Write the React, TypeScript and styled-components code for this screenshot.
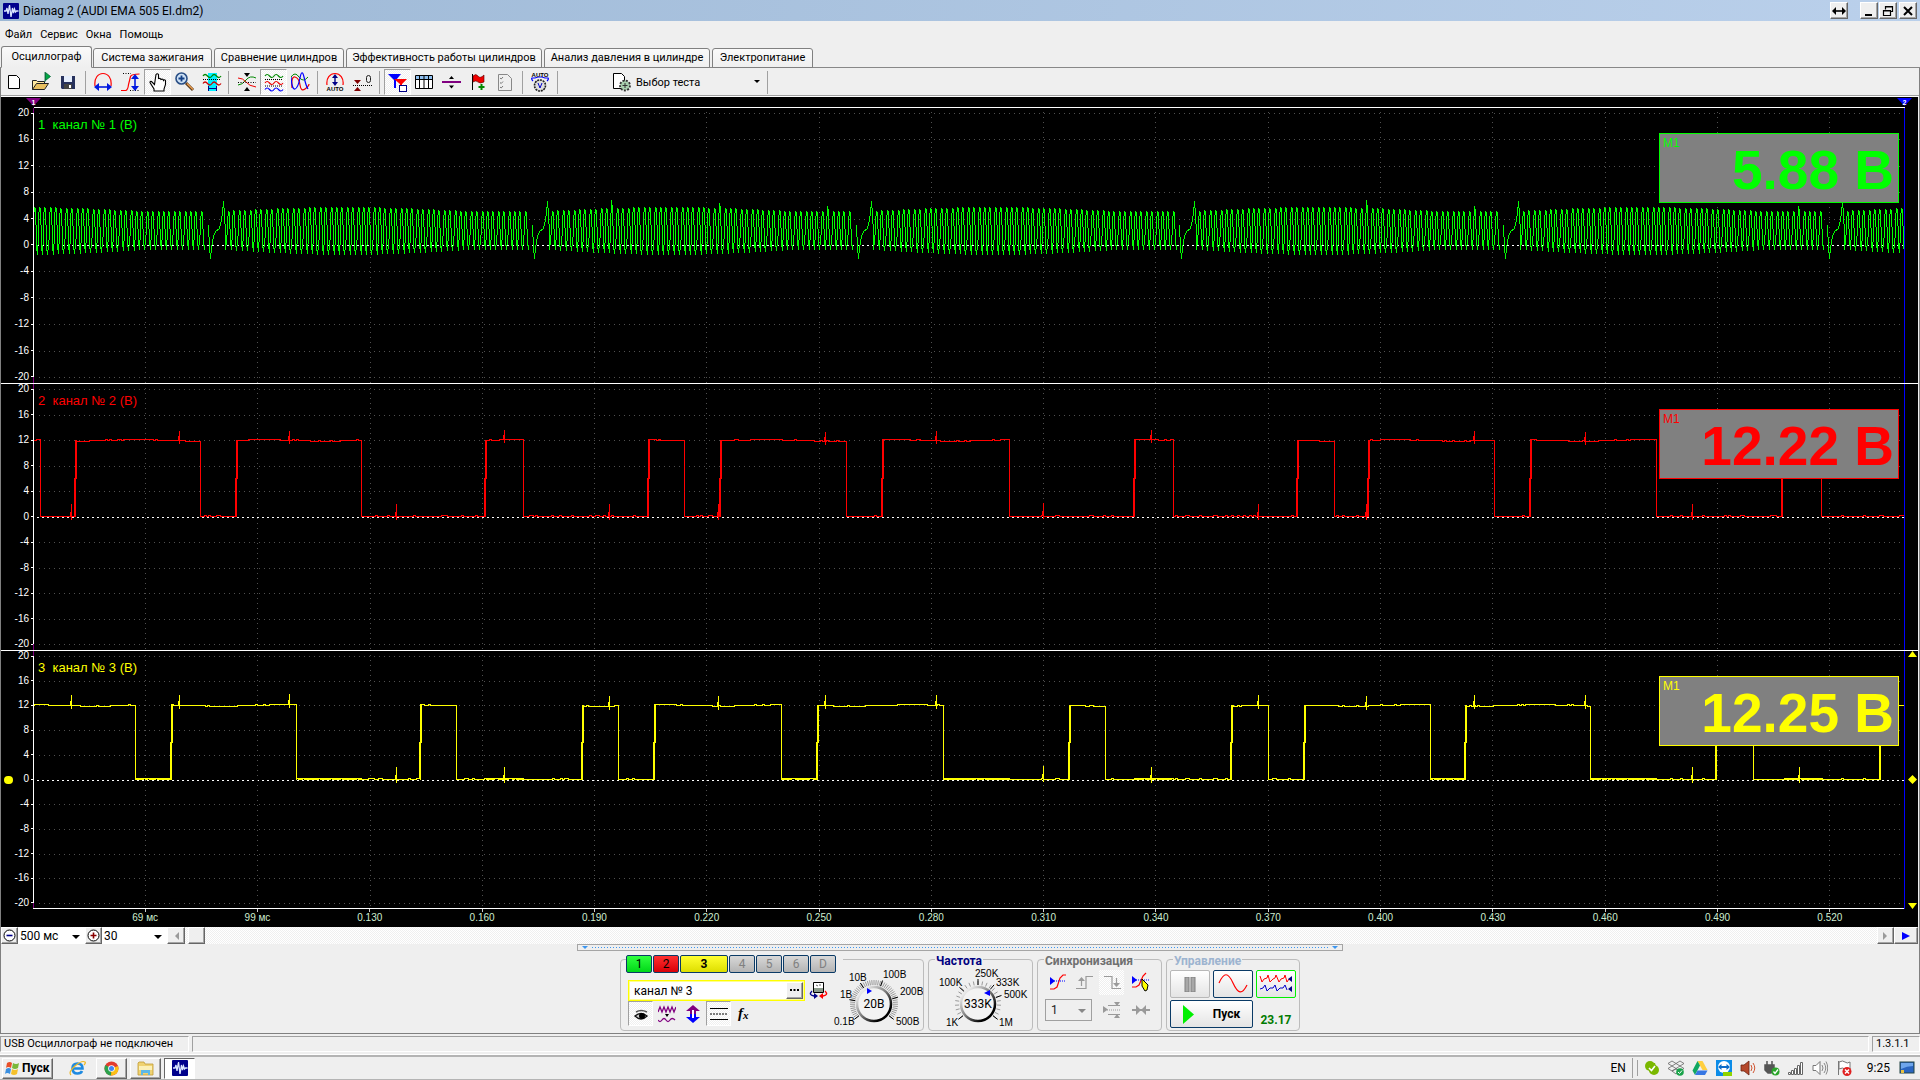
import React from "react";
import styled, { createGlobalStyle, css } from "styled-components";

const ui = `Roboto, "Noto Sans", "Liberation Sans", sans-serif`;
const arial = `"Liberation Sans", Arial, sans-serif`;

const hatch = css`
  background: repeating-conic-gradient(#ffffff 0 25%, #efefef 0 50%) 0 0 / 2px 2px;
`;

const Global = createGlobalStyle`
  * { box-sizing: border-box; }
  body { margin: 0; background: #efefef; font-family: ${ui}; font-size: 11px; color: #000; }
  button, input, select { font: inherit; color: inherit; margin: 0; padding: 0; }
  svg { display: block; flex: none; }
`;

const Page = styled.div`
  min-height: 100vh;
  display: flex;
  flex-direction: column;
  overflow: hidden;
`;

/* ---------- title bar and menu ---------- */

const TitleBar = styled.header`
  height: 21px;
  display: flex;
  align-items: center;
  padding: 0 3px;
  background: linear-gradient(90deg, #9db8d5, #bad0eb);
`;

const Title = styled.h1`
  flex: 1;
  margin: 0 0 0 4px;
  font-size: 12px;
  line-height: 16px;
  font-weight: 400;
`;

const WindowButtons = styled.div`
  display: flex;
  gap: 1px;
  margin-left: ${(p: { $gap?: number }) => p.$gap ?? 2}px;
`;

const raised = css`
  background: #efefef;
  border: 1px solid;
  border-color: #fff #666 #666 #fff;
  box-shadow: inset -1px -1px 0 #a5a5a5;
`;

const WinButton = styled.button`
  ${raised}
  width: 18px;
  height: 17px;
  display: flex;
  align-items: center;
  justify-content: center;
`;

const MenuBar = styled.nav`
  display: flex;
  gap: 8px;
  height: 25px;
  padding: 6px 5px 0;
`;

const MenuItem = styled.button`
  border: 0;
  background: none;
  height: 16px;
  line-height: 16px;
  font-size: 11px;
`;

const TabBar = styled.div`
  display: flex;
  align-items: flex-end;
  gap: 2px;
  height: 22px;
  padding-left: 1px;
  box-shadow: inset 0 -1px 0 #888;
`;

const Tab = styled.button<{ $w: number; $on?: boolean }>`
  width: ${(p) => p.$w}px;
  height: ${(p) => (p.$on ? 22 : 20)}px;
  border: 1px solid #808080;
  border-bottom-color: ${(p) => (p.$on ? "#efefef" : "#808080")};
  border-radius: 3px 3px 0 0;
  margin-right: ${(p) => (p.$on ? -1 : 0)}px;
  background: linear-gradient(#fafafa, #efefef);
  font-size: 11px;
  line-height: 16px;
  white-space: nowrap;
`;

/* ---------- window frame ---------- */

const Frame = styled.main`
  flex: 1;
  display: flex;
  flex-direction: column;
  border-left: 1px solid #808080;
  border-right: 1px solid #808080;
  border-bottom: 1px solid #808080;
`;

const Toolbar = styled.div`
  height: 29px;
  display: flex;
  align-items: center;
  border-bottom: 1px solid #fff;
  box-shadow: inset 0 -1px 0 #a0a0a0;
`;

const Tool = styled.button<{ $on?: boolean }>`
  width: 27px;
  height: 26px;
  display: flex;
  align-items: center;
  justify-content: center;
  border: 1px solid transparent;
  background: none;
  ${(p) => p.$on && hatch}
  ${(p) => p.$on && css`border-color: #a0a0a0 #fff #fff #a0a0a0;`}
`;

const ToolSep = styled.span`
  width: 8px;
  height: 23px;
  background: linear-gradient(#a0a0a0, #a0a0a0) 3px 0 / 1px 100% no-repeat;
`;

const TestPicker = styled.button`
  width: 202px;
  height: 24px;
  display: flex;
  align-items: center;
  gap: 4px;
  padding: 0 4px 0 50px;
  border: 0;
  background: none;
  text-align: left;
  font-size: 11px;
`;
const Grow = styled.span`flex: 1; white-space: nowrap;`;

/* ---------- plots ---------- */

const Plots = styled.section`
  flex: 1;
  min-height: 600px;
  margin-right: 1px;
  display: grid;
  grid-template-rows: 11px 276fr 267fr 258fr 18px;
  background: #000;
`;

const CursorStrip = styled.div`
  display: flex;
  justify-content: space-between;
  align-items: flex-end;
  padding: 0 6px 0 25px;
  background: linear-gradient(#fff, #fff) 33px 100% / calc(100% - 46px) 1px no-repeat;
`;

const ChannelRow = styled.div<{ $line?: boolean }>`
  position: relative;
  min-height: 0;
  display: grid;
  grid-template-columns: 32px minmax(0, 1fr) 13px;
  ${(p) => p.$line && css`box-shadow: inset 0 -1px 0 #fff;`}
`;

const Scale = styled.ol`
  margin: 0;
  padding: 0 0 ${(p: { $pad: number }) => p.$pad}px;
  list-style: none;
  display: flex;
  flex-direction: column;
  justify-content: space-between;
`;

const ScaleMark = styled.li`
  height: 10px;
  line-height: 10px;
  display: flex;
  align-items: center;
  justify-content: flex-end;
  gap: 2px;
  color: #fff;
  font-family: ${arial};
  font-size: 10px;
  &::after { content: ""; width: 2px; height: 1px; background: #fff; }
`;

const PlotSvg = styled.svg`
  width: 100%;
  height: 100%;
  min-height: 0;
`;

const ChannelName = styled.h2<{ $c: string }>`
  position: absolute;
  left: 37px;
  top: 9px;
  margin: 0;
  color: ${(p) => p.$c};
  font-family: ${arial};
  font-weight: 400;
  font-size: 13px;
  line-height: 16px;
  white-space: pre;
`;

const Readout = styled.output<{ $c: string }>`
  position: absolute;
  right: 19px;
  top: 25px;
  width: 240px;
  height: 70px;
  display: flex;
  justify-content: space-between;
  padding: 2px 4px 0 3px;
  background: #808080;
  border: 1px solid ${(p) => p.$c};
  color: ${(p) => p.$c};
  font-family: ${arial};
`;
const ReadoutName = styled.span`font-size: 12px; line-height: 14px;`;
const ReadoutValue = styled.span`font-size: 55px; line-height: 68px; font-weight: 700; white-space: nowrap;`;

const ZeroDot = styled.span`
  position: absolute;
  left: 3px;
  top: 125px;
  width: 9px;
  height: 8px;
  border-radius: 4px;
  background: #ff0;
`;

const TimeAxis = styled.ol`
  margin: 0;
  padding: 0 32px 0 88px;
  list-style: none;
  display: flex;
`;
const TimeMark = styled.li`
  flex: 1;
  display: flex;
  flex-direction: column;
  align-items: center;
  color: #cfeed0;
  font-family: ${arial};
  font-size: 10px;
  line-height: 12px;
  &::before { content: ""; width: 1px; height: 3px; background: #ccc; }
`;

/* ---------- zoom / scroll row ---------- */

const ScrollRow = styled.div`
  height: 17px;
  margin-right: 1px;
  display: flex;
  align-items: stretch;
  background: #fff;
`;

const SmallButton = styled.button<{ $w?: number }>`
  ${raised}
  width: ${(p) => p.$w ?? 17}px;
  height: 17px;
  display: flex;
  align-items: center;
  justify-content: center;
`;

const SelectWrap = styled.label<{ $w: number }>`
  position: relative;
  width: ${(p) => p.$w}px;
  display: flex;
  &::after {
    content: "";
    position: absolute;
    right: 5px;
    top: 50%;
    margin-top: -1px;
    border: 4px solid transparent;
    border-top-color: currentColor;
    border-bottom: 0;
  }
`;

const PlainSelect = styled.select`
  appearance: none;
  width: 100%;
  border: 0;
  padding-left: 2px;
  background: transparent;
  font-size: 12px;
`;

const Track = styled.div`
  ${hatch}
  flex: 1;
  padding-left: 3px;
`;

/* ---------- control panel ---------- */

const Splitter = styled.div`
  width: 766px;
  max-width: 100%;
  height: 7px;
  align-self: center;
  display: flex;
  align-items: center;
  gap: 4px;
  padding: 0 4px;
  border: 1px solid #a5a5a5;
`;
const Dots = styled.span`
  flex: 1;
  height: 1px;
  background: repeating-linear-gradient(90deg, #3c96f0 0 1px, transparent 1px 3px);
`;

const Panel = styled.div`
  display: flex;
  justify-content: center;
  gap: 4px;
  padding: 8px 0 2px;
`;

const Group = styled.section<{ $w: number }>`
  width: ${(p) => p.$w}px;
  height: 72px;
  border: 1px solid #bcbcbc;
  border-radius: 4px;
`;

const GroupTitle = styled.h3<{ $c: string }>`
  width: fit-content;
  height: 13px;
  margin: -5px 0 0 6px;
  padding: 0 1px;
  background: #efefef;
  color: ${(p) => p.$c};
  font-size: 12px;
  line-height: 12px;
  font-weight: 700;
`;

const ChannelGroup = styled(Group)`
  display: flex;
  padding-left: 5px;
`;
const ChannelLeft = styled.div`width: 207px;`;

const ChannelTabs = styled.div`
  display: flex;
  gap: 1px;
  width: 217px;
  margin-top: -5px;
  background: #efefef;
`;

const ChannelTab = styled.button<{ $bg?: string; $w?: number }>`
  flex: none;
  width: ${(p) => p.$w ?? 26}px;
  height: 18px;
  border: 1px solid #0a3a66;
  border-radius: 2px;
  background: ${(p) => p.$bg ?? "linear-gradient(#d8d8d8, #b4b4b4)"};
  color: ${(p) => (p.$bg ? "#000" : "#808080")};
  font-size: 12px;
  line-height: 16px;
  font-weight: ${(p) => (p.$w ? 700 : 400)};
`;

const NameRow = styled.div`
  display: flex;
  align-items: center;
  gap: 4px;
  margin: 7px 0 0 2px;
`;
const NameBox = styled.div`
  width: 177px;
  height: 21px;
  display: flex;
  border: 1px solid #ff0;
  outline: 1px solid #ffff90;
  outline-offset: -2px;
  background: #fff;
  padding: 1px;
`;
const NameInput = styled.input`
  flex: 1;
  min-width: 0;
  border: 0;
  outline: 0;
  padding-left: 4px;
  background: transparent;
  font-size: 12px;
`;

const IconRow = styled.div`
  display: flex;
  gap: 1px;
  margin: 0 0 0 2px;
`;
const IconButton = styled(Tool)<{ $soft?: boolean }>`
  width: 25px;
  height: 25px;
  ${(p) => p.$soft && hatch}
`;

const SyncGrid = styled.div`
  display: grid;
  grid-template-columns: 26px 28px 29px 29px;
  grid-template-rows: 28px 28px;
  align-items: center;
  padding: 0 0 0 7px;
`;
const SyncSelect = styled(SelectWrap)`
  grid-column: span 2;
  height: 22px;
  border: 1px solid #a0a0a0;
  color: #888;
  select { color: #222; padding-left: 5px; opacity: 1; }
`;

const RunGrid = styled.div`
  display: grid;
  grid-template-columns: repeat(3, 40px);
  grid-template-rows: 28px 28px;
  gap: 2px 3px;
  padding: 2px 0 0 3px;
`;
const RunButton = styled.button<{ $c: string; $wide?: boolean }>`
  grid-column: span ${(p) => (p.$wide ? 2 : 1)};
  display: flex;
  align-items: center;
  justify-content: center;
  gap: 19px;
  border: 1px solid ${(p) => p.$c};
  border-radius: 2px;
  background: linear-gradient(#fff, #e4e4e4);
  font-size: 12px;
  font-weight: 700;
`;
const Load = styled.output`
  align-self: end;
  justify-self: center;
  color: #007a00;
  font-size: 12px;
  line-height: 16px;
  font-weight: 700;
`;

/* ---------- status and task bar ---------- */

const StatusBar = styled.footer`
  height: 21px;
  display: flex;
  gap: 3px;
  padding: 2px 0;
  border-bottom: 1px solid #fff;
`;
const StatusCell = styled.span<{ $w?: number }>`
  ${(p) => (p.$w ? css`width: ${p.$w}px;` : css`flex: 1;`)}
  border: 1px solid;
  border-color: #a0a0a0 #fff #fff #a0a0a0;
  padding-left: 3px;
  font-size: 11px;
  line-height: 14px;
  white-space: nowrap;
`;

const TaskBar = styled.footer`
  height: 26px;
  display: flex;
  align-items: center;
  gap: 3px;
  padding: 0 5px 0 2px;
  border-top: 2px solid #b4b4b4;
  border-bottom: 2px solid #b4b4b4;
`;
const StartButton = styled.button`
  ${raised}
  width: 51px;
  height: 21px;
  display: flex;
  align-items: center;
  gap: 1px;
  padding-left: 1px;
  font-size: 12px;
  font-weight: 700;
`;
const TaskButton = styled.button<{ $kind?: "flat" | "on" }>`
  ${raised}
  width: 31px;
  height: 21px;
  display: flex;
  align-items: center;
  justify-content: center;
  ${(p) => p.$kind === "flat" && css`border-color: transparent; box-shadow: none; margin-left: 6px;`}
  ${(p) => p.$kind === "on" && css`background: #fff; border-color: #666 #fff #fff #666; box-shadow: none;`}
`;
const TaskSpace = styled.span`flex: 1;`;
const Lang = styled.span`
  padding-right: 6px;
  margin-right: 1px;
  border-right: 1px solid #a0a0a0;
  font-size: 12px;
  line-height: 20px;
`;
const Tray = styled.div`
  display: flex;
  align-items: center;
  gap: 8px;
  padding-left: 6px;
  border-left: 1px solid #a0a0a0;
`;
const Clock = styled.time`
  margin: 0 6px 0 12px;
  font-size: 12px;
  line-height: 20px;
`;

/* ---------- signal shapes ---------- */

const noise = (n: number) => {
  const v = Math.sin(n * 12.9898) * 43758.5453;
  return v - Math.floor(v);
};

const SPIKES = [71, 179, 289, 396, 504, 609, 718, 825, 936, 1043, 1151, 1258, 1366, 1474, 1585, 1692, 1799];

/* pickup from ignition visible on the crank sensor trace: position and height */
const PICKUP: [number, number][] = [[609, 8], [718, 5], [825, 5], [1366, 8], [1474, 5], [1799, 5]];

/* 60-2 trigger wheel: 58 teeth followed by a gap */
function crankPath() {
  const turn = 323.75;
  const tooth = turn / 60;
  let d = "";
  for (let k = -1; k < 6; k++) {
    const dip = Math.round(210 + k * turn);
    d += `M${dip - 2} 225L${dip - 1} 247L${dip} 258L${dip + 1} 247L${dip + 3} 236L${dip + 5} 231L${dip + 9} 228L${dip + 11} 219L${dip + 12} 213L${dip + 13} 201L${dip + 14} 214L${dip + 15} 232L${dip + 15} 249`;
    for (let i = 0; i < 57; i++) {
      const x = Math.round(dip + 18 + i * tooth);
      if (x > dip + turn - 5) break;
      const t = i < 44 ? Math.sin((Math.PI * (i + 1)) / 45) : 0;
      const extra = PICKUP.find(([s]) => Math.abs(s - x) < 3);
      const top = Math.round(211 - 4 * t);
      const low = Math.round(249 + 5 * t);
      const peak = extra ? top - extra[1] : top;
      d += `L${x - 1} ${low - 19}L${x - 1} ${top + 8}L${x} ${top + 1}L${x} ${peak}L${x + 1} ${top + 1}L${x + 1} ${top + 16}L${x + 2} ${top + 19}L${x + 2} ${low - 4}L${x + 3} ${low - 4}L${x + 3} ${low}`;
    }
  }
  return d;
}

function squarePath(edges: number[], hi: number, lo: number, nub: number) {
  let d = "";
  let high = true;
  let x = 34;
  const stops = [...edges, 1904];
  for (const e of stops) {
    const base = high ? hi : lo;
    d += x === 34 ? `M${x} ${base}` : `L${x} ${base}`;
    for (; x < e - 2; x += 2) {
      const wave = high ? Math.sin(x / 20 + edges.length) * 0.7 : 0;
      const y = base + Math.round(wave + (noise(x) > 0.85 ? -0.6 : 0));
      d += `H${x}V${y}`;
      const s = SPIKES.find((p) => p > x && p <= x + 2);
      if (s) d += `L${s - 1} ${y}L${s - 1} ${y - 4}L${s} ${y - 4}L${s} ${y - (high ? nub : 13)}L${s} ${y + 3}L${s} ${y}`;
    }
    if (e === 1904) d += `H${e}`;
    else if (high) d += `H${e}V${lo}`;
    else {
      const mid = Math.round((hi + lo) / 2);
      d += `H${e - 1}V${mid}H${e}V${lo}V${hi}H${e + 1}V${mid}V${hi}`;
    }
    x = e;
    high = !high;
  }
  return d;
}

const RED_EDGES = [40, 75, 200, 236, 361, 485, 523, 648, 684, 720, 846, 882, 1009, 1134, 1173, 1297, 1334, 1368, 1494, 1530, 1656, 1782, 1821];
const YELLOW_EDGES = [135, 171, 296, 420, 456, 582, 618, 654, 781, 817, 943, 1069, 1105, 1231, 1268, 1304, 1430, 1465, 1590, 1716, 1753, 1880];
const YELLOW_THICK = "M136 778H170M297 778H361M485 778H523M782 778H816M944 778H1009M1134 778H1173M1431 778H1464M1591 778H1656M1784 778H1822";

type ChannelSpec = { n: number; color: string; value: string; top: number; h: number; y20: number; yNeg: number; path: string };

const CHANNELS: ChannelSpec[] = [
  { n: 1, color: "#00ff00", value: "5.88 В", top: 108, h: 276, y20: 113, yNeg: 377, path: crankPath() },
  { n: 2, color: "#ff0000", value: "12.22 В", top: 384, h: 267, y20: 389, yNeg: 644, path: squarePath(RED_EDGES, 440, 516, 10) },
  { n: 3, color: "#ffff00", value: "12.25 В", top: 651, h: 258, y20: 656, yNeg: 903, path: squarePath(YELLOW_EDGES, 705, 779, 11) + YELLOW_THICK },
];

const MARKS = [20, 16, 12, 8, 4, 0, -4, -8, -12, -16, -20];
const TIMES = ["69 мс", "99 мс", "0.130", "0.160", "0.190", "0.220", "0.250", "0.280", "0.310", "0.340", "0.370", "0.400", "0.430", "0.460", "0.490", "0.520"];

function Channel({ c }: { c: ChannelSpec }) {
  const step = (c.yNeg - c.y20) / 10;
  return (
    <ChannelRow $line={c.n < 3}>
      <Scale $pad={c.n === 3 ? 1 : 2}>
        {MARKS.map((m) => <ScaleMark key={m}>{m}</ScaleMark>)}
      </Scale>
      <PlotSvg viewBox={`33 ${c.top} 1872 ${c.h}`} preserveAspectRatio="none" fill="none" shapeRendering="crispEdges">
        {MARKS.map((m, i) => {
          const y = Math.round(c.y20 + step * i) + 0.5;
          return m === 0
            ? <line key={m} x1="33" x2="1905" y1={y} y2={y} stroke="#fff" strokeDasharray="2 3" strokeDashoffset="1" />
            : <line key={m} x1="39" x2="1903" y1={y} y2={y} stroke="#505050" strokeDasharray="1 4" />;
        })}
        {TIMES.map((t, i) => {
          const x = Math.round(145 + i * 112.27) + 0.5;
          return <line key={t} x1={x} x2={x} y1={c.y20 - 1} y2={c.top + c.h} stroke="#505050" strokeDasharray="1 4" />;
        })}
        <path d={c.path} transform="translate(.5 .5)" stroke={c.color} strokeWidth="1" strokeLinecap="square" />
        <path d={`M33.5 ${c.top}V${c.top + c.h}`} stroke="#800080" />
        <path d={`M33.5 ${c.y20}V${c.yNeg}`} stroke="#fff" />
        {c.n === 3 && <path d="M33 908.5H1904" stroke="#fff" />}
        <path d={`M1904.5 ${c.top}V${c.top + c.h}`} stroke="#00f" />
        {c.n < 3 && <path d={`M33 ${c.top + c.h - 0.5}H1905`} stroke="#fff" />}
      </PlotSvg>
      {c.n === 3 && (
        <PlotSvg viewBox="1905 651 13 258" preserveAspectRatio="none" fill="#ff0">
          <path d="M1908 657h9l-4.500-6zM1908 779.500l4.500-4.500 4.500 4.500-4.500 4.500zM1908 903h9l-4.500 6z" />
        </PlotSvg>
      )}
      {c.n === 3 && <ZeroDot />}
      <ChannelName $c={c.color}>{`${c.n}  канал № ${c.n} (В)`}</ChannelName>
      <Readout $c={c.color} aria-label={`M1 канал ${c.n}`}>
        <ReadoutName>M1</ReadoutName>
        <ReadoutValue>{c.value}</ReadoutValue>
      </Readout>
    </ChannelRow>
  );
}

/* ---------- icons ---------- */

const Svg = ({ w = 20, h = 20, children }: { w?: number; h?: number; children: React.ReactNode }) => (
  <svg width={w} height={h} viewBox={`0 0 ${w} ${h}`} fill="none" aria-hidden="true">{children}</svg>
);

const Logo = () => (
  <Svg w={16} h={16}>
    <rect width="16" height="16" rx="1" fill="#00008c" />
    <path d="M1 8h2l1-3 1 6 1.500-9 1.500 12 1.500-9 1 5 1-4 1 3 1-1h2" stroke="#dbe6ff" strokeWidth="1.300" />
  </Svg>
);

const W = "q2-3 4.500 0t4.500 0 4.500 0 4.500 0";

const icons: Record<string, React.ReactNode> = {
  new: <path d="M3.500 3.500h8l3 3v10h-11z" fill="#fff" stroke="#000" />,
  open: <><path d="M.5 17.500v-9h4l1 1h7v3" fill="#ffe9a0" stroke="#222" /><path d="M.5 17.500l4-6h12l-4 6z" fill="#e8c060" stroke="#222" /><path d="M13 0v10M13.500 .5l5 4-5 4z" fill="#0a4" stroke="#063" strokeWidth=".8" /></>,
  save: <><path d="M2 4h14v13H3l-1-1z" fill="#27315c" /><path d="M5 4h8v6H5z" fill="#e6eefc" /><path d="M5 12h8v5H5z" fill="#444" /><path d="M10 13h2v3h-2z" fill="#fff" /></>,
  spanH: <><path d="M1 14C0 6 4 1.500 9 1.500S18 6 17 14" stroke="#f00" strokeWidth="1.200" /><path d="M4 15h10" stroke="#0018e0" strokeWidth="1.600" /><path d="M0 15l5-4v8zM18 15l-5-4v8z" fill="#0018e0" /></>,
  spanV: <><path d="M0 18.500h5q2-1 2.500-6l2-8q1-2.500 9-2.500" stroke="#f00" strokeWidth="1.200" /><path d="M2 1.500h8M9 18.500h10" stroke="#000" strokeDasharray="1 1.500" /><path d="M14 5v11" stroke="#0018e0" strokeWidth="1.600" /><path d="M14 2l-4 5h8zM14 19l-4-5h8z" fill="#0018e0" /></>,
  hand: <path d="M6.500 12.500l-3-3q-1.500-.5-1.500 1l4 6.500v2h10v-2l1.500-4.500v-4q-1-1.500-2 0-.5-2-2.500-1-.5-1.500-2.500-1v-4q-1.200-1.500-2.500 0z" fill="#fff" stroke="#000" strokeWidth="1.100" />,
  zoom: <><circle cx="6.500" cy="6.500" r="5.500" fill="#cfe2f5" stroke="#2a4f86" strokeWidth="1.600" /><path d="M6.500 3.500v6M3.500 6.500h6" stroke="#123f86" strokeWidth="1.800" /><path d="M11 11l7 7" stroke="#5a3a1a" strokeWidth="3" /><path d="M12 11.500l6 6" stroke="#f0a050" strokeWidth="1.200" /></>,
  region: <><path d="M6 1h9v18H6z" fill="#00f0ff" /><path d={`M1 4${W}`} stroke="#080" strokeWidth="1.300" /><path d={`M1 11.500${W}`} stroke="#c00" strokeWidth="1.300" /><path d="M1 7.500h18" stroke="#000" strokeDasharray="1 1" /><path d="M6.500 14v5M14.500 14v5M7 16.500h7" stroke="#008" /></>,
  compress: <><path d="M1 13q4 0 8-5t10-2" stroke="#080" /><path d="M1 6q5 0 8 4t10 5" stroke="#e00" /><path d="M1 10.500h18" stroke="#000" strokeDasharray="1 1.500" /><path d="M7 1h6l-3 4zM7 19h6l-3-4z" fill="#000" /></>,
  stack: <><path d={`M1 4${W}`} stroke="#080" strokeWidth="1.200" /><path d={`M1 11${W}`} stroke="#e00" strokeWidth="1.200" /><path d={`M1 17.500${W}`} stroke="#00f" strokeWidth="1.200" /><path d="M1 7.500h18M1 14h18" stroke="#000" strokeDasharray="1 1" /></>,
  overlay: <><path d="M0 5q4-6 8 0t9 0" stroke="#080" /><path d="M1 16Q0 4 4 5t5 8 5 4 4-5" stroke="#e00" strokeWidth="1.200" /><path d="M0 5q1 13 4 12t5-11 4-1 4 12" stroke="#00f" strokeWidth="1.200" /></>,
  auto: <><path d="M1 13C0 6 4 1.500 9 1.500S18 6 17 13" stroke="#f00" strokeWidth="1.200" /><path d="M9 4v8" stroke="#008" strokeWidth="1.400" /><path d="M6 6l3-4 3 4zM6 10l3 4 3-4z" fill="#008" /></>,
  zero: <><path d="M1 8h7l-3.500 4zM1 19h7l-3.500-4z" fill="#800000" /><path d="M0 13.500h19" stroke="#000" strokeDasharray="1 1" /><rect x="13.500" y="3.500" width="4" height="7" rx="2" stroke="#222" /></>,
  cursors: <><path d="M0 2h13L8 8v8H6V8z" fill="#00f" /><path d="M6 7h13l-5 5v7h-2v-7z" fill="#f00" /><rect x="11.500" y="13.500" width="7" height="6" fill="#fff" stroke="#008" /></>,
  table: <><path d="M.5 3.500h17v13H.5z" fill="#fff" stroke="#000" /><path d="M1 4h16v3H1z" fill="#8fc0f0" /><path d="M0 7.500h18M4.500 4v13M9 4v13M13.500 4v13" stroke="#000" /></>,
  split: <><path d="M0 10h19" stroke="#800080" strokeWidth="2" /><path d="M7 7h5l-2.500-3zM7 13.500h5l-2.500 3z" fill="#000" /></>,
  flag: <><path d="M3.500 2v16" stroke="#000" /><path d="M4 4q3-3 5 0t6-1v7q-4 2-6 0t-5 0z" fill="#f00000" stroke="#500" strokeWidth=".6" /><path d="M12.500 12v6M9.500 15h6" stroke="#080" strokeWidth="2" /></>,
  checks: <><path d="M2.500 2.500h9l4 4v12h-13z" stroke="#888" /><path d="M4 6l1.200 1L7 5M4 10.500l1.200 1L7 9.500M4 15l1.200 1L7 14" stroke="#777" /></>,
  autoV: <><path d="M2 9q-2-2-1-3h3l3-1h4l3 1h3q1 1-1 3" stroke="#00f" strokeWidth="1.200" /><circle cx="9" cy="13.500" r="5.500" fill="#ddd" stroke="#222" strokeDasharray="2 .8" strokeWidth="1.600" /><path d="M7 11l2 5 2-5" stroke="#00c" /></>,
  test: <><path d="M1.500 1.500h8l3 3v12h-11z" fill="#fff" stroke="#000" /><circle cx="13" cy="13.500" r="5" fill="#a9cfae" stroke="#333" strokeWidth="1.800" strokeDasharray="2 1.400" /><path d="M10.500 13.500h5M13 11v5" stroke="#333" /></>,
};

const autoText = (y: number) => (
  <text x="9" y={y} textAnchor="middle" fontFamily="Liberation Sans" fontSize="6" fontWeight="700" fill="#000">AUTO</text>
);

const TOOL_GROUPS: { id: string; label: string; on?: boolean }[][] = [
  [{ id: "new", label: "Новый" }, { id: "open", label: "Открыть" }, { id: "save", label: "Сохранить" }],
  [{ id: "spanH", label: "По горизонтали" }, { id: "spanV", label: "По вертикали" }, { id: "hand", label: "Рука", on: true }, { id: "zoom", label: "Лупа" }, { id: "region", label: "Участок" }],
  [{ id: "compress", label: "Сжать" }, { id: "stack", label: "Раздельно", on: true }, { id: "overlay", label: "Совместно" }],
  [{ id: "auto", label: "Авто" }, { id: "zero", label: "Ноль" }],
  [{ id: "cursors", label: "Маркеры", on: true }, { id: "table", label: "Таблица" }, { id: "split", label: "Разделить" }, { id: "flag", label: "Метка" }, { id: "checks", label: "Список" }],
  [{ id: "autoV", label: "Авто напряжение" }],
];

/* ---------- knobs ---------- */

type KnobProps = { view: string; w: number; cx: number; value: string; pointer: string; dense?: boolean; labels: [string, number, number][]; major: number[] };

function Knob({ view, w, cx, value, pointer, labels, major, dense }: KnobProps) {
  const cy = 1004;
  const ticks = dense ? 48 : 22;
  const ray = (a: number, r1: number, r2: number) => {
    const t = (a * Math.PI) / 180;
    return `M${cx + Math.sin(t) * r1} ${cy - Math.cos(t) * r1}L${cx + Math.sin(t) * r2} ${cy - Math.cos(t) * r2}`;
  };
  return (
    <svg width={w} height="66" viewBox={view} fontFamily="Liberation Sans" role="img" aria-label={value}>
      <defs>
        <linearGradient id={`rim${w}`} x1="0" y1="0" x2="1" y2="1">
          <stop offset=".15" stopColor="#e8e8e8" />
          <stop offset=".5" stopColor="#777" />
          <stop offset=".8" stopColor="#000" />
        </linearGradient>
      </defs>
      {Array.from({ length: ticks + 1 }, (_, i) => (
        <path key={i} d={ray(-128 + (256 / ticks) * i, 19, dense ? 24 : 23)} stroke="#9a9a9a" strokeWidth="1" />
      ))}
      {major.map((a) => <path key={a} d={ray(a, 19, 25)} stroke="#000" />)}
      <circle cx={cx} cy={cy} r="17" fill="#f3f3f3" stroke={`url(#rim${w})`} strokeWidth="2.500" />
      <path d={pointer} fill="#00f" />
      <text x={cx} y={cy + 4} textAnchor="middle" fontFamily="Roboto" fontSize="12">{value}</text>
      {labels.map(([t, x, y]) => <text key={t} x={x} y={y} fontSize="10">{t}</text>)}
    </svg>
  );
}

const gray = "#9a9a9a";

export default function App() {
  return (
    <>
      <Global />
      <Page>
        <TitleBar>
          <Logo />
          <Title>Diamag 2 (AUDI EMA 505 EI.dm2)</Title>
          <WindowButtons>
            <WinButton aria-label="Растянуть"><Svg w={14} h={10}><path d="M2 5h10" stroke="#000" strokeWidth="1.600" /><path d="M0 5l4-4v8zM14 5l-4-4v8z" fill="#000" /></Svg></WinButton>
          </WindowButtons>
          <WindowButtons $gap={12}>
            <WinButton aria-label="Свернуть"><Svg w={12} h={12}><path d="M2 10h7" stroke="#000" strokeWidth="2" /></Svg></WinButton>
            <WinButton aria-label="Восстановить"><Svg w={12} h={12}><path d="M3.500 4.500v-3h7v5h-2M3 2h8M1.500 5.500h7v5h-7zM1 6h8" stroke="#000" strokeWidth="1.200" /></Svg></WinButton>
          </WindowButtons>
          <WindowButtons>
            <WinButton aria-label="Закрыть"><Svg w={12} h={12}><path d="M2 2l8 8M10 2l-8 8" stroke="#000" strokeWidth="2" /></Svg></WinButton>
          </WindowButtons>
        </TitleBar>

        <MenuBar>
          {["Файл", "Сервис", "Окна", "Помощь"].map((m) => <MenuItem key={m}>{m}</MenuItem>)}
        </MenuBar>
        <TabBar role="tablist">
          <Tab role="tab" $on $w={91}>Осциллограф</Tab>
          <Tab role="tab" $w={119}>Система зажигания</Tab>
          <Tab role="tab" $w={130}>Сравнение цилиндров</Tab>
          <Tab role="tab" $w={196}>Эффективность работы цилиндров</Tab>
          <Tab role="tab" $w={166}>Анализ давления в цилиндре</Tab>
          <Tab role="tab" $w={101}>Электропитание</Tab>
        </TabBar>

        <Frame>
          <Toolbar>
            {TOOL_GROUPS.map((g, i) => (
              <React.Fragment key={i}>
                {g.map((t) => (
                  <Tool key={t.id} $on={t.on} aria-label={t.label}>
                    <Svg>{icons[t.id]}{t.id === "auto" && autoText(19)}{t.id === "autoV" && autoText(5)}</Svg>
                  </Tool>
                ))}
                <ToolSep />
              </React.Fragment>
            ))}
            <TestPicker>
              <Svg>{icons.test}</Svg>
              <Grow>Выбор теста</Grow>
              <Svg w={6} h={4}><path d="M0 0h6L3 3z" fill="#000" /></Svg>
            </TestPicker>
            <ToolSep />
          </Toolbar>

          <Plots>
            <CursorStrip>
              <svg width="15" height="10" viewBox="0 0 15 10" role="img" aria-label="Маркер 1"><path d="M0 0h15L7.500 8z" fill="#800080" /><text x="7.500" y="7" textAnchor="middle" fontFamily="Liberation Sans" fontSize="7" fontWeight="700" fill="#fff">1</text></svg>
              <svg width="15" height="10" viewBox="0 0 15 10" role="img" aria-label="Маркер 2"><path d="M0 0h15L7.500 8z" fill="#00f" /><text x="7.500" y="7" textAnchor="middle" fontFamily="Liberation Sans" fontSize="7" fontWeight="700" fill="#fff">2</text></svg>
            </CursorStrip>
            {CHANNELS.map((c) => <Channel key={c.n} c={c} />)}
            <TimeAxis>{TIMES.map((t) => <TimeMark key={t}>{t}</TimeMark>)}</TimeAxis>
          </Plots>

          <ScrollRow>
            <SmallButton aria-label="Уменьшить"><Svg w={13} h={13}><circle cx="6.500" cy="6.500" r="5.500" fill="#fff" stroke="#000" /><path d="M3.500 6.500h6" stroke="#008" strokeWidth="1.600" /></Svg></SmallButton>
            <SelectWrap $w={67}><PlainSelect aria-label="Длительность" defaultValue="500"><option value="500">500 мс</option></PlainSelect></SelectWrap>
            <SmallButton aria-label="Увеличить"><Svg w={13} h={13}><circle cx="6.500" cy="6.500" r="5.500" fill="#fff" stroke="#000" /><path d="M3.500 6.500h6M6.500 3.500v6" stroke="#800" strokeWidth="1.600" /></Svg></SmallButton>
            <SelectWrap $w={65}><PlainSelect aria-label="Шаг" defaultValue="30"><option>30</option></PlainSelect></SelectWrap>
            <SmallButton $w={18} aria-label="Влево"><Svg w={5} h={8}><path d="M5 0v8L1 4z" fill={gray} /></Svg></SmallButton>
            <Track><SmallButton aria-label="Ползунок" /></Track>
            <SmallButton aria-label="Вправо"><Svg w={5} h={8}><path d="M0 0v8l4-4z" fill={gray} /></Svg></SmallButton>
            <SmallButton $w={24} aria-label="Прокрутка"><Svg w={8} h={8}><path d="M0 0v8l8-4z" fill="#00f" /></Svg></SmallButton>
          </ScrollRow>

          <Splitter>
            <Svg w={6} h={4}><path d="M0 0h6L3 3z" fill="#3c96f0" /></Svg><Dots /><Svg w={6} h={4}><path d="M0 0h6L3 3z" fill="#3c96f0" /></Svg>
          </Splitter>

          <Panel>
            <ChannelGroup $w={304} aria-label="Канал">
              <ChannelLeft>
                <ChannelTabs>
                  <ChannelTab $bg="linear-gradient(#30ff40, #00d818)">1</ChannelTab>
                  <ChannelTab $bg="linear-gradient(#ff3030, #d80008)">2</ChannelTab>
                  <ChannelTab $bg="linear-gradient(#ffff30, #dede00)" $w={48}>3</ChannelTab>
                  {["4", "5", "6", "D"].map((t) => <ChannelTab key={t} disabled>{t}</ChannelTab>)}
                </ChannelTabs>
                <NameRow>
                  <NameBox>
                    <NameInput aria-label="Имя канала" defaultValue="канал № 3" />
                    <SmallButton aria-label="Выбрать"><Svg w={9} h={3}><path d="M0 0h2v2H0zM3.500 0h2v2h-2zM7 0h2v2H7z" fill="#000" /></Svg></SmallButton>
                  </NameBox>
                  <Svg w={19} h={19}><path d="M4.500 1.500h10v10h-10z" fill="#fff" stroke="#000" /><path d="M5 7h9v4H5z" fill="#8a9a8a" /><path d="M7 4l2 1M11 3v2" stroke="#666" /><path d="M3 10q-4 4 2 5h2" stroke="#008" strokeWidth="1.300" /><path d="M5 12l4 3-4 3z" fill="#008" /><path d="M16 10q4 4-2 5h-2" stroke="#f00" strokeWidth="1.300" /><path d="M14 12l-4 3 4 3z" fill="#f00" /></Svg>
                </NameRow>
                <IconRow>
                  <IconButton $on aria-label="Показать"><Svg w={18} h={16}><path d="M4 6q5-3 11 0" stroke="#555" strokeWidth="1.500" /><path d="M3 10q6-5 12 0-6 6-12 0z" fill="#ccc" stroke="#111" strokeWidth="1.400" /><circle cx="10" cy="10" r="3" fill="#000" /></Svg></IconButton>
                  <IconButton aria-label="Фильтр"><Svg w={18} h={18}><path d="M0 7l2-5 2 5 2-5 2 5 2-5 2 5 2-5 2 5 2-5M0 15q2 3 4 0t4 0 4 0 5 0" stroke="#800080" strokeWidth="1.300" /><path d="M7 9h4l-2 3z" fill="#000" /></Svg></IconButton>
                  <IconButton aria-label="Инверсия"><Svg w={16} h={18}><path d="M8 0L1 6h4v3h6V6h4z" fill="#800080" /><path d="M8 18l-7-6h4V9h6v3h4z" fill="#00f" /><path d="M7 5h2v8H7z" fill="#fff" /></Svg></IconButton>
                  <IconButton $on aria-label="Линии"><Svg w={18} h={16}><path d="M0 2.500h18M0 13.500h18" stroke="#000" /><path d="M0 8h18" stroke="#000" strokeDasharray="2 1" /></Svg></IconButton>
                  <IconButton aria-label="Функция"><Svg w={16} h={18}><text x="1" y="13" fontFamily="Liberation Serif" fontStyle="italic" fontWeight="700" fontSize="15" fill="#000">f</text><text x="6" y="14" fontFamily="Liberation Serif" fontStyle="italic" fontWeight="700" fontSize="11" fill="#000">x</text></Svg></IconButton>
                </IconRow>
              </ChannelLeft>
              <Knob view="832 960 90 66" w={90} cx={873} value="20В" dense pointer="M866 988v6l5-3z" major={[-128, -80, -33, 20, 74, 128]}
                labels={[["0.1В", 833, 1025], ["1В", 839, 998], ["10В", 848, 981], ["100В", 882, 978], ["200В", 899, 995], ["500В", 895, 1025]]} />
            </ChannelGroup>

            <Group $w={105} aria-label="Частота">
              <GroupTitle $c="#000080">Частота</GroupTitle>
              <Knob view="928 968 102 66" w={102} cx={977} value="333K" pointer="M989 990l-6 3 6 3z" major={[-128, -48, 0, 40, 70, 128]}
                labels={[["1K", 945, 1026], ["100K", 938, 986], ["250K", 974, 977], ["333K", 995, 986], ["500K", 1003, 998], ["1M", 998, 1026]]} />
            </Group>

            <Group $w={125} aria-label="Синхронизация">
              <GroupTitle $c="#707070">Синхронизация</GroupTitle>
              <SyncGrid>
                <IconButton aria-label="Уровень"><Svg w={18} h={18}><path d="M1 16h4l3-2 3-9 3-3h3" stroke="#f00" strokeWidth="1.200" /><path d="M1 8h16" stroke="#00f" strokeDasharray="1 1" /><path d="M1 4v8l5-4z" fill="#00f" /></Svg></IconButton>
                <IconButton aria-label="Фронт"><Svg w={18} h={18}><path d="M1 15.500h10v-12h7M6.500 13V5" stroke={gray} strokeWidth="1.200" /><path d="M3 8l3.500-4L10 8z" fill={gray} /></Svg></IconButton>
                <IconButton $soft aria-label="Спад"><Svg w={18} h={18}><path d="M1 3.500h8v12h9M13.500 5v8" stroke={gray} strokeWidth="1.200" /><path d="M10 10l3.500 4L17 10z" fill={gray} /></Svg></IconButton>
                <IconButton aria-label="Захват"><Svg w={20} h={20}><path d="M1 15h4l3-2 4-9 3-3" stroke="#f00" strokeWidth="1.200" /><path d="M1 8h18" stroke="#00f" strokeDasharray="1 1" /><path d="M1 4v8l5-4z" fill="#00f" /><path d="M11 7l6 6-1 5-2 1-3-5z" fill="#ff0" stroke="#000" /></Svg></IconButton>
                <SyncSelect $w={47}><PlainSelect aria-label="Канал синхронизации" defaultValue="1" disabled><option>1</option></PlainSelect></SyncSelect>
                <IconButton aria-label="Окно"><Svg w={18} h={18}><path d="M0 9h18" stroke={gray} strokeDasharray="1 1" /><path d="M0 5v7l5-3.500zM11 1h6l-3 4zM11 17h6l-3-4z" fill={gray} /><path d="M5 4.500h12M5 13.500h12" stroke={gray} /></Svg></IconButton>
                <IconButton aria-label="Центр"><Svg w={18} h={10}><path d="M0 5h18" stroke={gray} strokeWidth="2" /><path d="M4 0v10l5-5zM14 0v10l-5-5z" fill={gray} /></Svg></IconButton>
              </SyncGrid>
            </Group>

            <Group $w={134} aria-label="Управление">
              <GroupTitle $c="#9db4d0">Управление</GroupTitle>
              <RunGrid>
                <RunButton $c="#b8b8b8" disabled aria-label="Пауза"><Svg w={12} h={15}><path d="M1 0h4v15H1zM7 0h4v15H7z" fill="#a8a8a8" stroke="#808080" /></Svg></RunButton>
                <RunButton $c="#0a3a66" aria-label="Однократно"><Svg w={30} h={20}><path d="M1 9C6-2 10-2 15 9s9 12 14 2" stroke="#f00" strokeWidth="1.200" /></Svg></RunButton>
                <RunButton $c="#00f000" aria-label="Непрерывно"><Svg w={34} h={20}><path d="M1 2l2 6 2-3 3-1 1-3 2 7 3-3 2-1 1-3 3 7 2-3 3-1 1-3 2 7 2-3" stroke="#f00" /><path d="M1 15l3-1 2-3 2 6 3-3h3l2-3 2 6 3-3h3l2-3 2 5" stroke="#00c" /><path d="M33 2v6l-4-3zM33 12v6l-4-3z" fill="#008" /></Svg></RunButton>
                <RunButton $c="#0a3a66" $wide><Svg w={11} h={19}><path d="M0 0l11 9.500L0 19z" fill="#00f000" /></Svg>Пуск</RunButton>
                <Load>23.17</Load>
              </RunGrid>
            </Group>
          </Panel>
        </Frame>

        <StatusBar>
          <StatusCell $w={189}>USB Осциллограф не подключен</StatusCell>
          <StatusCell />
          <StatusCell $w={48}>1.3.1.1</StatusCell>
        </StatusBar>

        <TaskBar>
          <StartButton>
            <Svg w={17} h={16}><path d="M3 3q3-2 5 0l-1 5q-3-2-5 0z" fill="#e8502a" /><path d="M9 3q3 2 6 0l-1 5q-3 2-6 0z" fill="#7ab83a" /><path d="M2 9q3-2 5 0l-1 5q-3-2-5 0z" fill="#3a8fe0" /><path d="M8 9q3 2 6 0l-1 5q-3 2-6 0z" fill="#f6c12c" /></Svg>
            Пуск
          </StartButton>
          <TaskButton $kind="flat" aria-label="Internet Explorer"><Svg w={17} h={16}><path d="M4 8.500h9.500q0-5-5-5t-5 5 5 5q3.500 0 4.500-2.500" stroke="#1e8ae0" strokeWidth="2.600" /><path d="M2 15Q-1 12 6 6t10-4q1 1-1 3" stroke="#f0b820" strokeWidth="1.200" /></Svg></TaskButton>
          <TaskButton aria-label="Chrome"><Svg w={15} h={15}><circle cx="7.500" cy="7.500" r="7" fill="#e33b2e" /><path d="M7.500 7.500L1.400 4A7 7 0 0 0 7 14.500z" fill="#2ba24c" /><path d="M7.500 7.500L14 5A7 7 0 0 1 7 14.500z" fill="#fbc116" /><circle cx="7.500" cy="7.500" r="3.300" fill="#fff" /><circle cx="7.500" cy="7.500" r="2.500" fill="#4285f4" /></Svg></TaskButton>
          <TaskButton aria-label="Проводник"><Svg w={17} h={16}><path d="M1 3l1-1h5l1 2h8v11H1z" fill="#efd271" stroke="#bf9a35" strokeWidth=".8" /><path d="M2 6h13v4H2z" fill="#fbf0b8" /><path d="M4 15v-5h9v5h-2v-2H6v2z" fill="#5bb8e8" /></Svg></TaskButton>
          <TaskButton $kind="on" aria-label="Diamag 2"><Logo /></TaskButton>
          <TaskSpace />
          <Lang>EN</Lang>
          <Tray>
            <Svg w={16} h={16}><circle cx="6" cy="6" r="5" fill="#7ab800" /><circle cx="10" cy="10" r="5" fill="#7ab800" /><path d="M3 3h8l3 10H6z" fill="#7ab800" /><path d="M5 8l2.500 2.500L11 6" stroke="#fff" strokeWidth="1.600" /></Svg>
            <Svg w={16} h={16}><path d="M4 1l4 2.500L4 6 0 3.500zM12 1l4 2.500L12 6 8 3.500zM4 6l4 2.500L4 11 0 8.500zM12 6l4 2.500L12 11 8 8.500zM8 9l4 2-4 3-4-3z" fill="#eee" stroke="#666" strokeWidth=".8" /><circle cx="12" cy="12" r="3.800" fill="#1aa34a" /><path d="M10 12l1.500 1.500L14 10.500" stroke="#fff" /></Svg>
            <Svg w={16} h={16}><path d="M5.500 1h5l5 9h-5z" fill="#ffcf3f" /><path d="M5.500 1L8 5.500 3 15 .5 10.500z" fill="#11a861" /><path d="M5.500 10.500h10L13 15H3z" fill="#3777e3" /></Svg>
            <Svg w={16} h={16}><rect width="16" height="16" fill="#0c8ce8" /><circle cx="8" cy="7" r="6" fill="#fff" /><path d="M4 7h8" stroke="#0c6cc8" strokeWidth="2" /><path d="M2 7l3.500-3v6zM14 7l-3.500-3v6z" fill="#0c6cc8" /><path d="M7 12h9v4H7z" fill="#8fd400" /></Svg>
            <Svg w={16} h={16}><path d="M1 5h3l5-4v14l-5-4H1z" fill="#b5482b" stroke="#6b2412" strokeWidth=".8" /><path d="M11 5q2 3 0 6M13 3q3.500 5 0 10" stroke="#d0532f" /></Svg>
            <Svg w={16} h={16}><path d="M1 5h9v5l-3 3H4l-3-3zM3 1v4M8 1v4" fill="#555" stroke="#555" strokeWidth="1.500" /><circle cx="11.500" cy="11.500" r="4" fill="#2aa52a" /><path d="M9.500 11.500l1.500 2 3-4" stroke="#fff" strokeWidth="1.300" /></Svg>
            <Svg w={16} h={16}><path d="M.5 12.500h2v2h-2zM3.500 10.500h2v4h-2zM6.500 8.500h2v6h-2zM9.500 5.500h2v9h-2zM12.500 2.500h2v12h-2z" fill="#fff" stroke="#666" /></Svg>
            <Svg w={16} h={16}><path d="M1 5.500h3l4-4v13l-4-4H1z" fill="#fff" stroke="#777" /><path d="M10 5q2 3 0 6M12 3q3.500 5 0 10M14 1.500q3.500 6.500 0 13" stroke="#888" /></Svg>
            <Svg w={16} h={16}><path d="M2.500 1v14M3 2q4-2 6 0t5 0v7q-3 2-5 0t-6 0z" fill="#fff" stroke="#777" /><circle cx="11" cy="11.500" r="4.500" fill="#e02020" /><path d="M9 9.500l4 4M13 9.500l-4 4" stroke="#fff" strokeWidth="1.500" /></Svg>
          </Tray>
          <Clock>9:25</Clock>
          <Svg w={16} h={14}><rect x="1" y="1" width="14" height="11" fill="#2a65c0" stroke="#244" /><path d="M2 2h12v3Q8 5 2 8z" fill="#6ea6ec" /><path d="M2 9h3v3H2z" fill="#e8c040" /></Svg>
        </TaskBar>
      </Page>
    </>
  );
}
